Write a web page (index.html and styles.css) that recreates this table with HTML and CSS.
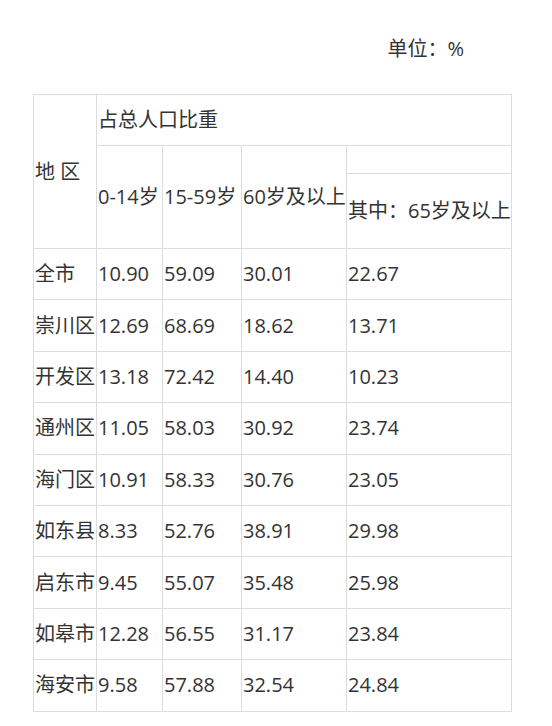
FILE: index.html
```html
<!DOCTYPE html>
<html lang="zh-CN">
<head>
<meta charset="utf-8">
<title>各地区人口年龄构成</title>
<link rel="stylesheet" href="styles.css">
</head>
<body>
<p class="unit">单位：%</p>
<table class="data">
  <colgroup>
    <col class="c0"><col class="c1"><col class="c2"><col class="c3"><col class="c4">
  </colgroup>
  <tr class="h1">
    <td rowspan="3">地 区</td>
    <td colspan="4">占总人口比重</td>
  </tr>
  <tr class="h2">
    <td rowspan="2">0-14岁</td>
    <td rowspan="2">15-59岁</td>
    <td rowspan="2">60岁及以上</td>
    <td></td>
  </tr>
  <tr class="h3">
    <td>其中：65岁及以上</td>
  </tr>
  <tr class="row"><td>全市</td><td>10.90</td><td>59.09</td><td>30.01</td><td>22.67</td></tr>
  <tr class="row"><td>崇川区</td><td>12.69</td><td>68.69</td><td>18.62</td><td>13.71</td></tr>
  <tr class="row"><td>开发区</td><td>13.18</td><td>72.42</td><td>14.40</td><td>10.23</td></tr>
  <tr class="row"><td>通州区</td><td>11.05</td><td>58.03</td><td>30.92</td><td>23.74</td></tr>
  <tr class="row"><td>海门区</td><td>10.91</td><td>58.33</td><td>30.76</td><td>23.05</td></tr>
  <tr class="row"><td>如东县</td><td>8.33</td><td>52.76</td><td>38.91</td><td>29.98</td></tr>
  <tr class="row"><td>启东市</td><td>9.45</td><td>55.07</td><td>35.48</td><td>25.98</td></tr>
  <tr class="row"><td>如皋市</td><td>12.28</td><td>56.55</td><td>31.17</td><td>23.84</td></tr>
  <tr class="row"><td>海安市</td><td>9.58</td><td>57.88</td><td>32.54</td><td>24.84</td></tr>
</table>
</body>
</html>
```
FILE: styles.css
```css
html, body {
  margin: 0;
  padding: 0;
  background: #ffffff;
}

body {
  font-family: "Open Sans", "Noto Sans CJK SC", sans-serif;
  font-size: 20px;
  color: #333333;
}

.unit {
  margin: 0;
  padding: 34px 88px 0 0;
  height: 30px;
  line-height: 30px;
  text-align: right;
}

.data {
  margin: 30px 0 0 33px;
  border-collapse: collapse;
  table-layout: fixed;
  width: 479px;
  border: 1px solid #e2e2e2;
}

.c0 { width: 63px; }
.c1 { width: 66px; }
.c2 { width: 79px; }
.c3 { width: 105px; }
.c4 { width: 165px; }

.data td {
  border: 1px solid #dcdcdc;
  padding: 0 1px;
  vertical-align: middle;
  white-space: nowrap;
  line-height: 26px;
  overflow: hidden;
}

.h1 td { height: 50px; }
.h2 td { height: 27px; }
.h3 td { height: 74px; }
.row td { height: 50.4px; }
```
